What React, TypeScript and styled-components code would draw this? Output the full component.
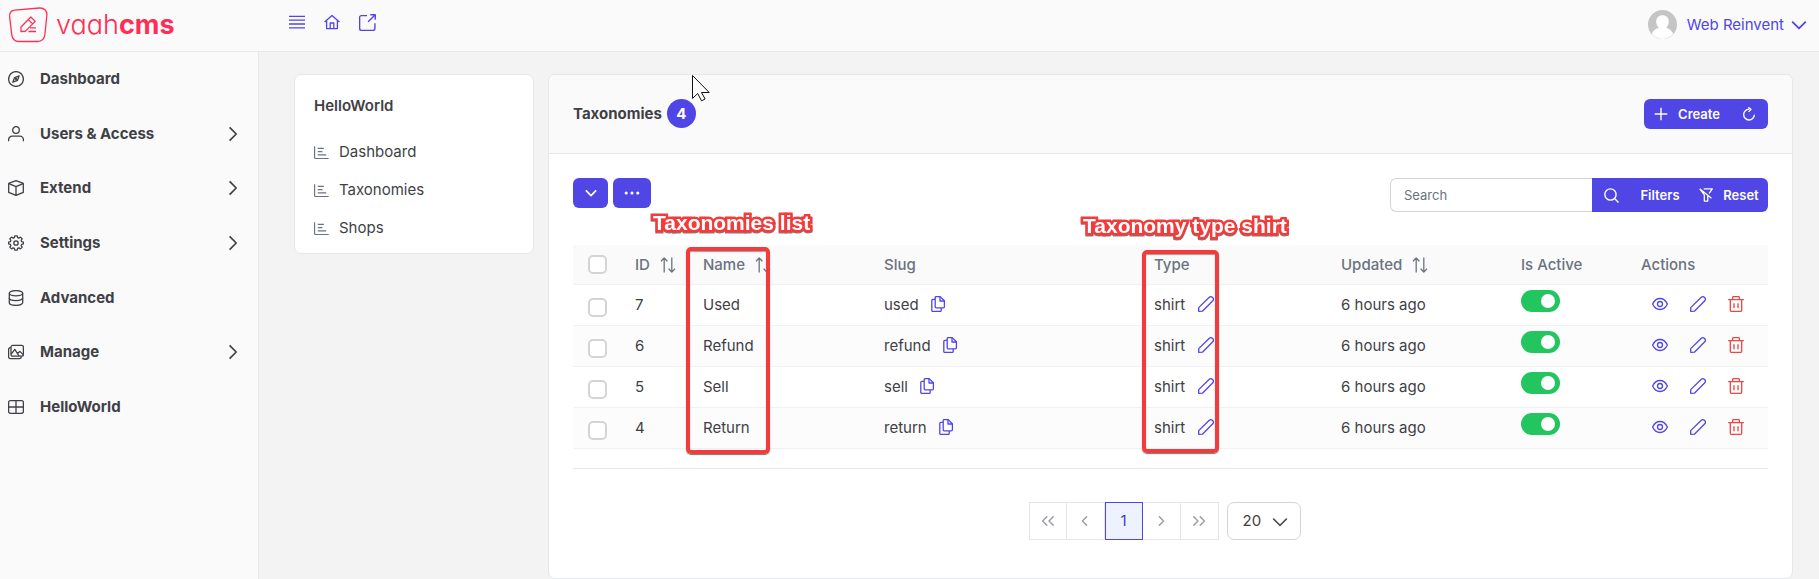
import React from 'react';
import styled, { createGlobalStyle, css } from 'styled-components';

const color = {
  primary: '#4f46e5',
  primarySoft: '#eef2ff',
  text: '#3f3f46',
  muted: '#6b7280',
  line: '#e5e7eb',
  rowLine: '#f1f1f3',
  panel: '#fafafa',
  page: '#f3f3f3',
  green: '#22c55e',
  danger: '#ef4444',
  brand: '#ff2e57',
  mark: '#f43b3b',
};

const GlobalStyle = createGlobalStyle`
  *, *::before, *::after { box-sizing: border-box; }
  body {
    margin: 0;
    background: ${color.page};
    color: ${color.text};
    font: 400 15px/20px Inter, "Liberation Sans", sans-serif;
  }
  button, input, select { font: inherit; color: inherit; margin: 0; }
  button { cursor: pointer; }
  a { color: inherit; text-decoration: none; }
`;

/* ---------- icons ---------- */

const shapes = {
  compass: (
    <>
      <circle cx="8" cy="8" r="7.4" />
      <path d="M11.2 4.8 9.4 9.4 4.8 11.2 6.6 6.6z" />
      <circle cx="8" cy="8" r="0.5" />
    </>
  ),
  user: (
    <>
      <circle cx="8" cy="4" r="3.3" />
      <path d="M.6 15.2v-1.4a3.6 3.6 0 0 1 3.6-3.6h7.6a3.6 3.6 0 0 1 3.6 3.6v1.4" />
    </>
  ),
  box: (
    <>
      <path d="M8 .6 15.3 3.4v9L8 15.4.7 12.4v-9z" />
      <path d="M.9 3.6 8 6.6l7.1-3M8 6.6v8.6" />
    </>
  ),
  cog: (
    <>
      <path d="M6.7.7h2.6l.4 1.9 1.3.6 1.7-1.1 1.8 1.8-1.1 1.7.6 1.3 1.9.4v1.9l-1.9.5-.6 1.3 1.1 1.7-1.8 1.8-1.7-1.1-1.3.6-.4 1.9H6.7L6.3 14l-1.3-.6-1.7 1.1-1.8-1.8L2.600 11 2 9.700.1 9.200V7.300L2 6.900l.6-1.300L1.500 3.900l1.800-1.800L5 3.200l1.300-.6z" transform="translate(.4 .1) scale(.95)" />
      <circle cx="8" cy="8" r="2.2" />
    </>
  ),
  database: (
    <>
      <ellipse cx="8" cy="3.2" rx="6.7" ry="2.6" />
      <path d="M1.3 3.200v9.600c0 1.400 3 2.600 6.700 2.600s6.700-1.200 6.700-2.600V3.200" />
      <path d="M1.300 8c0 1.400 3 2.600 6.700 2.600s6.700-1.200 6.700-2.600" />
    </>
  ),
  images: (
    <>
      <rect x="3" y="1.4" width="12.4" height="10.8" rx="1.6" />
      <path d="M3 3.700H2.200A1.600 1.600 0 0 0 .6 5.300v7.700a1.600 1.600 0 0 0 1.600 1.600h9.400a1.600 1.600 0 0 0 1.600-1.600v-.8" />
      <path d="m3.200 10.200 3.600-4.800 4.200 6.600M9.400 9.400l2.400-2 3.400 3.200" />
    </>
  ),
  microsoft: (
    <>
      <rect x=".6" y="1.6" width="14.8" height="12.8" rx="1.8" />
      <path d="M8 1.600v12.800M.6 8h14.800" />
    </>
  ),
  bars: <path d="M0 2.400h16M0 6.200h16M0 10h16M0 13.800h16" />,
  home: (
    <>
      <path d="M.6 8 8 1.400 15.400 8" />
      <path d="M2.600 6.400v8.200h10.800V6.400M6.200 14.400V9h3.600v5.400" />
    </>
  ),
  external: (
    <>
      <path d="M7.600 1.500H2.300A1.700 1.700 0 0 0 .6 3.200v10.500a1.700 1.700 0 0 0 1.700 1.700h11a1.700 1.700 0 0 0 1.700-1.700V8.600" />
      <path d="M10.600.7h4.700v4.700M15.100.9 8.600 7.400" />
    </>
  ),
  chart: (
    <>
      <path d="M.6 1.200v12.200a1 1 0 0 0 1 1h14" />
      <path d="M4 3.600h6.500M4 7h5M4 10.600h9" />
    </>
  ),
  chevronRight: <path d="m4.600 1.400 6.600 6.600-6.600 6.600" />,
  chevronDown: <path d="M1.200 4.600 8 11.400l6.800-6.800" />,
  dots: (
    <>
      <circle cx="2.2" cy="8" r=".9" fill="currentColor" />
      <circle cx="8" cy="8" r=".9" fill="currentColor" />
      <circle cx="13.8" cy="8" r=".9" fill="currentColor" />
    </>
  ),
  plus: <path d="M8 .8v14.400M.8 8h14.400" />,
  refresh: (
    <>
      <path d="M8.200 2.600A6.100 6.100 0 1 0 14.100 8.800" />
      <path d="m7.200.4 3 2.300-2.600 2.900" />
    </>
  ),
  search: (
    <>
      <circle cx="6.9" cy="6.9" r="6" />
      <path d="m11.300 11.300 4.200 4.200" />
    </>
  ),
  filterSlash: (
    <path d="M5.400.9h9.800l-3.600 5.300M.8.900l13.400 10.900M.9 1l5.200 6.800v7.100h3.900V8.600" />
  ),
  sort: (
    <>
      <path d="M4.200 15.400V1M1 4.200 4.200 1l3.200 3.200" />
      <path d="M11.800.6V15M8.600 11.800l3.200 3.200 3.200-3.200" />
    </>
  ),
  copy: (
    <>
      <path d="M5.200 1.600A1 1 0 0 1 6.200.6h4l4.200 4.200v6a1 1 0 0 1-1 1H6.200a1 1 0 0 1-1-1z" />
      <path d="M10 .8v4.200h4.200M5 3.400H2.800a1 1 0 0 0-1 1v10a1 1 0 0 0 1 1h7.400a1 1 0 0 0 1-1v-2.400" />
    </>
  ),
  pencil: (
    <path d="M.7 15.300v-3.700L11.300 1.300a2.100 2.100 0 0 1 3 0l.5.500a2.100 2.100 0 0 1 0 3L4.400 15.200z" />
  ),
  eye: (
    <>
      <path d="M.6 8C2.200 4.600 4.900 2.500 8 2.500S13.800 4.600 15.400 8C13.800 11.400 11.100 13.500 8 13.500S2.200 11.400.6 8z" />
      <circle cx="8" cy="8" r="2.5" />
    </>
  ),
  trash: (
    <>
      <path d="M.2 3.700h15.600M2.300 3.700v10.200a1.500 1.500 0 0 0 1.500 1.500h8.400a1.500 1.500 0 0 0 1.500-1.500V3.700" />
      <path d="M4.600 3.500V1.600a1 1 0 0 1 1-1h4.800a1 1 0 0 1 1 1v1.900M6 7.200v5M10 7.200v5" />
    </>
  ),
  anglesLeft: <path d="M7.200 3.400 2.600 8l4.600 4.600M13.600 3.400 9 8l4.600 4.600" />,
  angleLeft: <path d="M10 3.400 5.400 8l4.600 4.600" />,
  angleRight: <path d="M6 3.400 10.600 8 6 12.600" />,
  anglesRight: <path d="M2.400 3.400 7 8l-4.600 4.600M8.800 3.400 13.400 8l-4.600 4.600" />,
};

type IconName = keyof typeof shapes;

const Svg = styled.svg`
  display: block;
  flex: none;
  fill: none;
  stroke: currentColor;
  stroke-linejoin: round;
`;

function Icon({ name, size = 16, weight = 1.3 }: { name: IconName; size?: number; weight?: number }) {
  return (
    <Svg width={size} height={size} viewBox="0 0 16 16" strokeWidth={weight} aria-hidden="true">
      {shapes[name]}
    </Svg>
  );
}

/* ---------- top bar ---------- */

const Page = styled.div`
  position: relative;
  min-height: 100vh;
  display: grid;
  grid-template: auto 1fr / 259px minmax(0, 1fr);
`;

const TopBar = styled.header`
  grid-column: 1 / -1;
  height: 52px;
  display: flex;
  align-items: center;
  padding: 0 12px 2px 8px;
  background: ${color.panel};
  border-bottom: 1px solid ${color.line};
`;

const Brand = styled.a`
  display: flex;
  align-items: center;
  gap: 8px;
  width: 281px;
  color: ${color.brand};
  font-size: 27px;
  line-height: 36px;
  font-weight: 300;
  font-feature-settings: 'cv11';
  b { font-weight: 700; }
`;

const TopLinks = styled.nav`
  display: flex;
  gap: 19px;
  padding-bottom: 4px;
  color: ${color.primary};
`;

const UserMenu = styled.button`
  display: flex;
  align-items: center;
  margin-left: auto;
  padding: 0;
  border: 0;
  background: none;
  color: ${color.primary};
`;

const Avatar = styled.svg`
  margin-right: 10px;
`;

const UserName = styled.span`
  margin-right: 7px;
`;

/* ---------- side bar ---------- */

const SideBar = styled.nav`
  background: ${color.panel};
  border-right: 1px solid ${color.line};
`;

const SideList = styled.div`
  display: grid;
  grid-auto-rows: 1fr;
  min-height: 382px;
`;

const SideLink = styled.a`
  display: flex;
  align-items: center;
  gap: 16px;
  padding: 0 17px 0 8px;
  font-weight: 700;
  span { flex: 1; }
`;

/* ---------- content ---------- */

const Content = styled.main`
  display: grid;
  grid-template-columns: 240px minmax(0, 1fr);
  align-items: start;
  gap: 14px;
  padding: 22px 26px 0 35px;
`;

const Card = styled.section`
  background: #fff;
  border: 1px solid ${color.line};
  border-radius: 7px;
  overflow: hidden;
`;

const MenuCard = styled(Card)`
  padding: 21px 19px 6px;
`;

const MenuTitle = styled.h2`
  margin: 0 0 17px;
  font-size: 15px;
  line-height: 20px;
  font-weight: 600;
`;

const MenuLink = styled.a`
  display: flex;
  align-items: center;
  gap: 10px;
  height: 38px;
  svg { color: ${color.muted}; }
`;

const CardHead = styled.div`
  display: flex;
  align-items: center;
  justify-content: space-between;
  height: 79px;
  padding: 0 24px 1px;
  background: ${color.panel};
  border-bottom: 1px solid ${color.line};
`;

const Title = styled.h1`
  display: flex;
  align-items: center;
  gap: 5px;
  margin: 0;
  font-size: 15px;
  line-height: 20px;
  font-weight: 700;
`;

const Badge = styled.span`
  width: 29px;
  height: 29px;
  border-radius: 50%;
  background: ${color.primary};
  color: #fff;
  font-weight: 700;
  line-height: 29px;
  text-align: center;
`;

const Group = styled.div`
  display: flex;
`;

const Button = styled.button<{ $w: number; $tall?: boolean; $gap?: number }>`
  display: flex;
  align-items: center;
  justify-content: center;
  gap: ${(p) => p.$gap ?? 10}px;
  width: ${(p) => p.$w}px;
  height: ${(p) => (p.$tall ? 34 : 30)}px;
  padding: 0;
  border: 0;
  border-radius: 6px;
  background: ${color.primary};
  color: #fff;
  font-size: 13px;
  font-weight: 600;
  ${Group} > & { border-radius: 0; }
  ${Group} > &:first-child { border-radius: 6px 0 0 6px; }
  ${Group} > &:last-child { border-radius: 0 6px 6px 0; }
`;

const SearchInput = styled.input`
  width: 202px;
  height: 34px;
  padding: 0 13px;
  border: 1px solid #d1d5db;
  border-right: 0;
  border-radius: 6px 0 0 6px;
  background: #fff;
  font-size: 13px;
  &::placeholder { color: ${color.muted}; opacity: 1; }
`;

const CardBody = styled.div`
  padding: 24px 24px 38px;
`;

const Toolbar = styled.div`
  display: flex;
  align-items: flex-start;
  justify-content: space-between;
  margin-bottom: 33px;
`;

const Actions = styled.div`
  display: flex;
  gap: 5px;
`;

/* ---------- table ---------- */

const TableWrap = styled.div`
  position: relative;
  padding-bottom: 19px;
  border-bottom: 1px solid ${color.line};
`;

const Table = styled.table`
  width: 100%;
  table-layout: fixed;
  border-collapse: separate;
  border-spacing: 0;
`;

const cell = css`
  padding: 0 0 0 15px;
  border-bottom: 1px solid ${color.rowLine};
  text-align: left;
  white-space: nowrap;
`;

const HeadCell = styled.th`
  ${cell}
  height: 40px;
  background: ${color.panel};
  color: ${color.muted};
  font-weight: 500;
`;

const Row = styled.tr`
  &:nth-child(even) { background: #fcfcfc; }
`;

const Cell = styled.td`
  ${cell}
  height: 41px;
`;

const CheckCell = styled(Cell)`
  padding-top: 4px;
`;

const Inline = styled.span<{ $gap?: number }>`
  display: flex;
  align-items: center;
  gap: ${(p) => p.$gap ?? 10}px;
`;

const Check = styled.input`
  display: block;
  appearance: none;
  width: 19px;
  height: 19px;
  margin: 0;
  border: 2px solid #d4d4d8;
  border-radius: 5px;
  background: #fff;
`;

const Switch = styled.input`
  display: block;
  appearance: none;
  width: 39px;
  height: 22px;
  margin: 0 0 8px;
  padding: 4px;
  border-radius: 11px;
  background: #d4d4d8;
  &::before {
    content: '';
    display: block;
    width: 14px;
    height: 14px;
    border-radius: 50%;
    background: #fff;
  }
  &:checked { background: ${color.green}; }
  &:checked::before { margin-left: 16px; }
`;

const IconButton = styled.button<{ $danger?: boolean; $wide?: boolean }>`
  display: flex;
  align-items: center;
  justify-content: center;
  width: ${(p) => (p.$wide ? 38 : 18)}px;
  height: 30px;
  padding: 0 0 2px;
  border: 0;
  background: none;
  color: ${(p) => (p.$danger ? color.danger : color.primary)};
`;

/* Call-outs laid over the table columns. */
const Frame = styled.div<{ $x: number; $y: number; $w: number; $h: number }>`
  position: absolute;
  left: ${(p) => p.$x}px;
  top: ${(p) => p.$y}px;
  width: ${(p) => p.$w}px;
  height: ${(p) => p.$h}px;
  border: 4px solid ${color.mark};
  border-radius: 5px;
  box-shadow: 0 1px 1px #777, inset 0 1px 1px #999;
  pointer-events: none;
`;

const Callout = styled.div<{ $x: number; $y: number }>`
  position: absolute;
  left: ${(p) => p.$x}px;
  top: ${(p) => p.$y}px;
  color: #fff;
  font: 700 21px/24px "Liberation Sans", Arial, sans-serif;
  white-space: nowrap;
  -webkit-text-stroke: 5px ${color.mark};
  paint-order: stroke fill;
  filter: drop-shadow(0 1px 0 #8a7a7a);
  pointer-events: none;
`;

/* ---------- paginator ---------- */

const Paginator = styled.nav`
  display: flex;
  justify-content: center;
  gap: 8px;
  padding: 33px 12px 0 0;
`;

const PageButton = styled.button<{ $current?: boolean }>`
  display: flex;
  align-items: center;
  justify-content: center;
  width: 38px;
  height: 38px;
  padding: 0;
  border: 1px solid ${color.line};
  background: #fff;
  color: #a1a1aa;
  & + & { border-left: 0; }
  ${(p) =>
    p.$current &&
    css`
      && {
        border: 1px solid ${color.primary};
        background: ${color.primarySoft};
        color: #4338ca;
      }
    `}
`;

const SelectBox = styled.label`
  position: relative;
  color: #52525b;
  svg {
    position: absolute;
    right: 13px;
    top: 12px;
    pointer-events: none;
  }
`;

const Select = styled.select`
  appearance: none;
  width: 74px;
  height: 38px;
  padding: 0 15px;
  border: 1px solid #d4d4d8;
  border-radius: 7px;
  background: #fff;
  color: ${color.text};
`;

const Cursor = styled.svg`
  position: absolute;
  left: 691px;
  top: 74px;
  pointer-events: none;
`;

/* ---------- data ---------- */

const sideLinks: { icon: IconName; label: string; more?: boolean }[] = [
  { icon: 'compass', label: 'Dashboard' },
  { icon: 'user', label: 'Users & Access', more: true },
  { icon: 'box', label: 'Extend', more: true },
  { icon: 'cog', label: 'Settings', more: true },
  { icon: 'database', label: 'Advanced' },
  { icon: 'images', label: 'Manage', more: true },
  { icon: 'microsoft', label: 'HelloWorld' },
];

const columns = [
  { label: 'ID', width: 68, sort: true },
  { label: 'Name', width: 181, sort: true },
  { label: 'Slug', width: 270 },
  { label: 'Type', width: 187 },
  { label: 'Updated', width: 180, sort: true },
  { label: 'Is Active', width: 120 },
  { label: 'Actions', width: 142 },
];

const rows = [
  { id: 7, name: 'Used', slug: 'used' },
  { id: 6, name: 'Refund', slug: 'refund' },
  { id: 5, name: 'Sell', slug: 'sell' },
  { id: 4, name: 'Return', slug: 'return' },
];

export default function App() {
  return (
    <Page>
      <GlobalStyle />
      <TopBar>
        <Brand href="#">
          <svg width="40" height="36" viewBox="0 0 40 36" fill="none" stroke="currentColor" aria-hidden="true">
            <path strokeWidth="1.3" d="M6.500 3.200 31.500 1c4.500-.3 7.700 2.600 7.400 7l-2 19.500c-.5 4.600-3 7-7.500 7H11c-4.500 0-6.600-2.200-7.200-6.600L1.700 10.500C1.100 6 2.500 3.700 6.500 3.200z" />
            <path strokeWidth="1.3" strokeLinejoin="round" d="M13 24.500V20L22.800 10l4.400 4.400-10 10zM20.300 12.600l4.300 4.300M22 20.900h6M20.500 24.500H28" />
          </svg>
          <span>vaah<b>cms</b></span>
        </Brand>
        <TopLinks aria-label="Shortcuts">
          <a href="#" aria-label="Toggle menu"><Icon name="bars" /></a>
          <a href="#" aria-label="Home"><Icon name="home" /></a>
          <a href="#" aria-label="Open site"><Icon name="external" size={17} /></a>
        </TopLinks>
        <UserMenu>
          <Avatar width="29" height="29" viewBox="0 0 29 29" aria-hidden="true">
            <circle cx="14.5" cy="14.5" r="14.5" fill="#c5c5c5" />
            <path fill="#fff" d="M14.500 5.300c3.800 0 6.300 2.700 6.300 6.300 0 2.600-1 4.900-2.600 6.200 3.300.9 5.900 3.300 7 6A14.500 14.500 0 0 1 14.500 29a14.500 14.500 0 0 1-10.700-5.200c1.100-2.700 3.700-5.100 7-6-1.600-1.300-2.600-3.600-2.600-6.200 0-3.600 2.500-6.300 6.300-6.300z" />
          </Avatar>
          <UserName>Web Reinvent</UserName>
          <Icon name="chevronDown" weight={1.8} />
        </UserMenu>
      </TopBar>

      <SideBar aria-label="Main">
        <SideList>
          {sideLinks.map((l) => (
            <SideLink href="#" key={l.label}>
              <Icon name={l.icon} />
              <span>{l.label}</span>
              {l.more && <Icon name="chevronRight" weight={1.7} />}
            </SideLink>
          ))}
        </SideList>
      </SideBar>

      <Content>
        <MenuCard>
          <MenuTitle>HelloWorld</MenuTitle>
          {['Dashboard', 'Taxonomies', 'Shops'].map((label) => (
            <MenuLink href="#" key={label}>
              <Icon name="chart" size={15} />
              {label}
            </MenuLink>
          ))}
        </MenuCard>

        <Card>
          <CardHead>
            <Title>
              Taxonomies <Badge>4</Badge>
            </Title>
            <Group>
              <Button $w={86}><Icon name="plus" size={14} weight={1.6} />Create</Button>
              <Button $w={38} aria-label="Reload"><Icon name="refresh" size={14} weight={1.6} /></Button>
            </Group>
          </CardHead>

          <CardBody>
            <Toolbar>
              <Actions>
                <Button $w={35} aria-label="Bulk actions"><Icon name="chevronDown" size={12} weight={2.2} /></Button>
                <Button $w={38} aria-label="More actions"><Icon name="dots" size={16} /></Button>
              </Actions>
              <Group>
                <SearchInput placeholder="Search" aria-label="Search" />
                <Button $w={38} $tall aria-label="Run search"><Icon name="search" size={15} weight={1.5} /></Button>
                <Button $w={60} $tall>Filters</Button>
                <Button $w={78} $tall><Icon name="filterSlash" size={14} weight={1.5} />Reset</Button>
              </Group>
            </Toolbar>

            <TableWrap>
              <Table>
                <colgroup>
                  <col width={47} />
                  {columns.map((c) => <col key={c.label} width={c.width} />)}
                </colgroup>
                <thead>
                  <tr>
                    <HeadCell><Check type="checkbox" aria-label="Select all" /></HeadCell>
                    {columns.map((c) => (
                      <HeadCell key={c.label}>
                        <Inline>
                          {c.label}
                          {c.sort && <Icon name="sort" />}
                        </Inline>
                      </HeadCell>
                    ))}
                  </tr>
                </thead>
                <tbody>
                  {rows.map((r) => (
                    <Row key={r.id}>
                      <CheckCell><Check type="checkbox" aria-label={`Select ${r.name}`} /></CheckCell>
                      <Cell>{r.id}</Cell>
                      <Cell>{r.name}</Cell>
                      <Cell>
                        <Inline>
                          {r.slug}
                          <IconButton aria-label={`Copy ${r.slug}`}><Icon name="copy" /></IconButton>
                        </Inline>
                      </Cell>
                      <Cell>
                        <Inline $gap={12}>
                          shirt
                          <IconButton aria-label={`Edit type of ${r.name}`}><Icon name="pencil" /></IconButton>
                        </Inline>
                      </Cell>
                      <Cell>6 hours ago</Cell>
                      <Cell><Switch type="checkbox" role="switch" defaultChecked aria-label={`${r.name} is active`} /></Cell>
                      <Cell>
                        <Inline $gap={0}>
                          <IconButton $wide aria-label="View"><Icon name="eye" /></IconButton>
                          <IconButton $wide aria-label="Edit"><Icon name="pencil" /></IconButton>
                          <IconButton $wide $danger aria-label="Delete"><Icon name="trash" /></IconButton>
                        </Inline>
                      </Cell>
                    </Row>
                  ))}
                </tbody>
              </Table>
              <Frame $x={113} $y={2} $w={84} $h={207} />
              <Frame $x={569} $y={5} $w={77} $h={203} />
              <Callout $x={80} $y={-34}>Taxonomies list</Callout>
              <Callout $x={510} $y={-31}>Taxonomy type shirt</Callout>
            </TableWrap>

            <Paginator aria-label="Pages">
              <Group>
                <PageButton aria-label="First page"><Icon name="anglesLeft" weight={1.5} /></PageButton>
                <PageButton aria-label="Previous page"><Icon name="angleLeft" weight={1.5} /></PageButton>
                <PageButton $current>1</PageButton>
                <PageButton aria-label="Next page"><Icon name="angleRight" weight={1.5} /></PageButton>
                <PageButton aria-label="Last page"><Icon name="anglesRight" weight={1.5} /></PageButton>
              </Group>
              <SelectBox>
                <Select aria-label="Rows per page" defaultValue="20">
                  <option>20</option>
                  <option>50</option>
                </Select>
                <Icon name="chevronDown" weight={1.6} />
              </SelectBox>
            </Paginator>
          </CardBody>
        </Card>
      </Content>

      <Cursor width="20" height="28" viewBox="0 0 20 28" aria-hidden="true">
        <path d="M1.500 1.500v23l5.200-5 3.800 7.300 3.600-1.800-3.600-6.500h7.700z" fill="#fff" stroke="#111" />
      </Cursor>
    </Page>
  );
}
